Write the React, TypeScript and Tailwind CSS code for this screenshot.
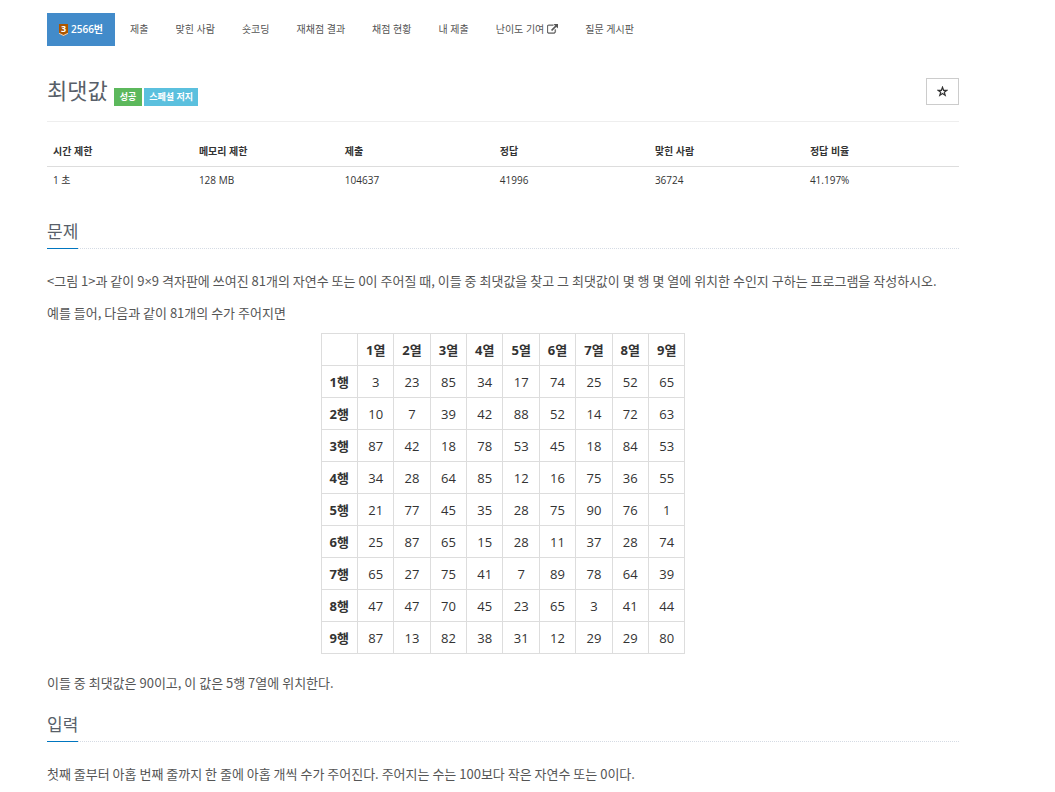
import React from 'react';

const menu = ['제출', '맞힌 사람', '숏코딩', '재채점 결과', '채점 현황', '내 제출', '난이도 기여', '질문 게시판'];

const info = [
  { label: '시간 제한', value: '1 초', width: 'w-[16%]' },
  { label: '메모리 제한', value: '128 MB', width: 'w-[16%]' },
  { label: '제출', value: '104637', width: 'w-[17%]' },
  { label: '정답', value: '41996', width: 'w-[17%]' },
  { label: '맞힌 사람', value: '36724', width: 'w-[17%]' },
  { label: '정답 비율', value: '41.197%', width: 'w-[17%]' },
];

const grid = [
  [3, 23, 85, 34, 17, 74, 25, 52, 65],
  [10, 7, 39, 42, 88, 52, 14, 72, 63],
  [87, 42, 18, 78, 53, 45, 18, 84, 53],
  [34, 28, 64, 85, 12, 16, 75, 36, 55],
  [21, 77, 45, 35, 28, 75, 90, 76, 1],
  [25, 87, 65, 15, 28, 11, 37, 28, 74],
  [65, 27, 75, 41, 7, 89, 78, 64, 39],
  [47, 47, 70, 45, 23, 65, 3, 41, 44],
  [87, 13, 82, 38, 31, 12, 29, 29, 80],
];

// Bronze tier shield with its level number
const TierBadge: React.FC = () => (
  <span className="relative flex h-3 w-[9px] justify-center" aria-label="Bronze III">
    <svg viewBox="0 0 9 12" className="absolute inset-0 h-3 w-[9px]">
      <path d="M0 0h9v9.500L4.500 12 0 9.500z" fill="#ad5600" />
      <path d="M0 8.700l4.500 2.300L9 8.700v1L4.500 12 0 9.700z" fill="#f3d9bd" />
    </svg>
    <span className="relative text-[9px] leading-[10px] font-bold text-white">3</span>
  </span>
);

const ExternalIcon: React.FC = () => (
  <svg viewBox="0 0 1792 1792" className="size-[11px]" fill="currentColor">
    <path d="M1408 928v320q0 119-84.500 203.500T1120 1536H288q-119 0-203.500-84.500T0 1248V416q0-119 84.500-203.500T288 128h704q14 0 23 9t9 23v64q0 14-9 23t-23 9H288q-66 0-113 47t-47 113v832q0 66 47 113t113 47h832q66 0 113-47t47-113V928q0-14 9-23t23-9h64q14 0 23 9t9 23zm384-864v512q0 26-19 45t-45 19-45-19l-176-176-652 652q-10 10-23 10t-23-10L695 983q-10-10-10-23t10-23l652-652-176-176q-19-19-19-45t19-45 45-19h512q26 0 45 19t19 45z" stroke="currentColor" strokeWidth="60" />
  </svg>
);

const SectionTitle: React.FC<{ children: React.ReactNode }> = ({ children }) => (
  <div className="flex border-b border-dotted border-[#d5dbe4]">
    <h2 className="-mb-px border-b border-[#0076c0] pb-1 text-[17px] leading-6 text-[#585f69]">{children}</h2>
  </div>
);

const Paragraph: React.FC<{ className: string; children: React.ReactNode }> = ({ className, children }) => (
  <p className={`font-['Noto_Sans_CJK_KR',sans-serif] ${className}`}>{children}</p>
);

export default function App() {
  return (
    <div className="min-h-screen bg-white pt-[13px] pr-24 pb-2 pl-[47px] font-['Open_Sans','Noto_Sans_CJK_KR',sans-serif] text-[13px] leading-5 text-[#555]">
      <nav>
        <ul className="flex gap-[3px] text-[10px] leading-[15px] whitespace-nowrap text-[#555]">
          <li>
            <a href="#problem" className="flex items-center gap-[3px] bg-[#428bca] px-3 py-[9px] font-semibold text-white">
              <TierBadge />
              2566번
            </a>
          </li>
          {menu.map((item) => (
            <li key={item}>
              <a href="#menu" className="flex items-center gap-[3px] px-3 py-[9px]">
                {item}
                {item === '난이도 기여' && <ExternalIcon />}
              </a>
            </li>
          ))}
        </ul>
      </nav>

      <header className="mt-7 flex items-start justify-between border-b border-[#eee] pb-[15px]">
        <div className="flex items-end gap-[6px]">
          <h1 className="text-[22px] leading-8 text-[#585f69]">최댓값</h1>
          <div className="flex gap-0.5 text-[9px] leading-[18px] font-bold text-white">
            <span className="bg-[#5cb85c] px-[6px]">성공</span>
            <span className="bg-[#5bc0de] px-[5px]">스페셜 저지</span>
          </div>
        </div>
        <button type="button" aria-label="즐겨찾기" className="mt-1 flex h-[27px] w-[33px] items-center justify-center border border-[#ccc] text-[#333]">
          <svg viewBox="0 0 11 11" className="size-[11px]" fill="none" stroke="currentColor" strokeWidth="1.2">
            <path d="M5.500 1.200l1.100 3.100h3.200L7.300 6.200l.9 3.200-2.700-1.900-2.700 1.900.9-3.200L1.200 4.300h3.200z" />
          </svg>
        </button>
      </header>

      <table className="mt-[15px] w-full table-fixed text-left text-[10px] leading-[17px] text-[#333]">
        <thead>
          <tr className="border-b border-[#ddd]">
            {info.map((col) => (
              <th key={col.label} className={`${col.width} px-[6px] py-[6px] font-bold`}>{col.label}</th>
            ))}
          </tr>
        </thead>
        <tbody>
          <tr>
            {info.map((col) => (
              <td key={col.label} className="px-[6px] pt-[5px] pb-[7px]">{col.value}</td>
            ))}
          </tr>
        </tbody>
      </table>

      <section className="mt-6">
        <SectionTitle>문제</SectionTitle>
        <Paragraph className="mt-[22px]">
          {'<그림 1>과 같이 9'}
          <span className="font-['Open_Sans',sans-serif]">×</span>
          {'9 격자판에 쓰여진 81개의 자연수 또는 0이 주어질 때, 이들 중 최댓값을 찾고 그 최댓값이 몇 행 몇 열에 위치한 수인지 구하는 프로그램을 작성하시오.'}
        </Paragraph>
        <Paragraph className="mt-3">예를 들어, 다음과 같이 81개의 수가 주어지면</Paragraph>
        <table className="mx-auto mt-[10px] w-2/5 table-fixed border-collapse text-center text-[13px] leading-[19px] text-[#333]">
          <thead>
            <tr>
              <td className="border border-[#ddd]" />
              {grid.map((_, i) => (
                <th key={i} className="border border-[#ddd] pt-[7px] pb-[5px] font-bold">{i + 1}열</th>
              ))}
            </tr>
          </thead>
          <tbody>
            {grid.map((row, i) => (
              <tr key={i}>
                <th className="border border-[#ddd] pt-[7px] pb-[5px] font-bold">{i + 1}행</th>
                {row.map((n, j) => (
                  <td key={j} className="border border-[#ddd] pt-[7px] pb-[5px]">{n}</td>
                ))}
              </tr>
            ))}
          </tbody>
        </table>
        <Paragraph className="mt-[19px]">이들 중 최댓값은 90이고, 이 값은 5행 7열에 위치한다.</Paragraph>
      </section>

      <section className="mt-5">
        <SectionTitle>입력</SectionTitle>
        <Paragraph className="mt-[22px]">
          첫째 줄부터 아홉 번째 줄까지 한 줄에 아홉 개씩 수가 주어진다. 주어지는 수는 100보다 작은 자연수 또는 0이다.
        </Paragraph>
      </section>
    </div>
  );
}
